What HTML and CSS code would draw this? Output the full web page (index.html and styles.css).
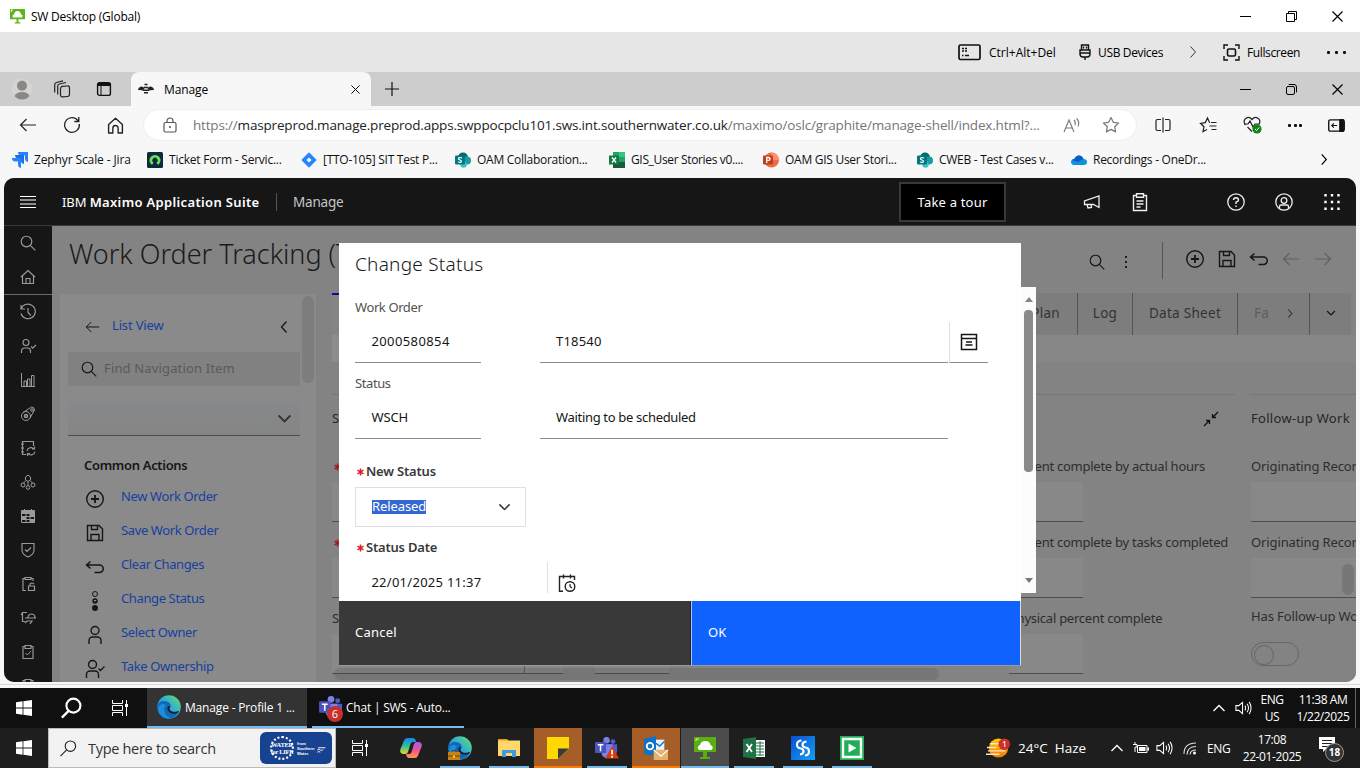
FILE: index.html
```html
<!DOCTYPE html>
<html lang="en">
<head>
<meta charset="utf-8">
<title>SW Desktop (Global)</title>
<link rel="stylesheet" href="styles.css">
</head>
<body>
<svg class="defs" width="0" height="0" aria-hidden="true">
  <defs>
    <linearGradient id="gEdge" x1="0" y1="1" x2="1" y2="0"><stop offset="0" stop-color="#0c59a4"/><stop offset=".5" stop-color="#2aa9e0"/><stop offset="1" stop-color="#6de35a"/></linearGradient>
    <linearGradient id="gCopA" x1="0" y1="0" x2="0" y2="1"><stop offset="0" stop-color="#1681f0"/><stop offset=".5" stop-color="#2cc39b"/><stop offset="1" stop-color="#f5cf2c"/></linearGradient>
    <linearGradient id="gCopB" x1="0" y1="0" x2="0" y2="1"><stop offset="0" stop-color="#9a62f5"/><stop offset=".5" stop-color="#f0528f"/><stop offset="1" stop-color="#ff9a4a"/></linearGradient>
    <linearGradient id="gHaze" x1="0" y1="0" x2="0" y2="1"><stop offset="0" stop-color="#ffc800"/><stop offset="1" stop-color="#f27a0c"/></linearGradient>
    <linearGradient id="gBlue" x1="0" y1="0" x2="1" y2="1"><stop offset="0" stop-color="#0a4ed0"/><stop offset="1" stop-color="#12a0f5"/></linearGradient>
  </defs>
  <symbol id="min" viewBox="0 0 11 11"><path d="M0 5.5h11" stroke="currentColor" fill="none"/></symbol>
  <symbol id="restore" viewBox="0 0 11 11"><path d="M.5 2.5h8v8h-8zM2.5 2.5v-2h8v8h-2" stroke="currentColor" fill="none"/></symbol>
  <symbol id="restoreR" viewBox="0 0 11 11"><rect x=".5" y="2.5" width="8" height="8" rx="1.5" stroke="currentColor" fill="none"/><path d="M2.7.5h5.3a2.5 2.5 0 0 1 2.5 2.5v5.300" stroke="currentColor" fill="none"/></symbol>
  <symbol id="close" viewBox="0 0 11 11"><path d="M.5.500l10 10M10.500.500l-10 10" stroke="currentColor" stroke-width="1.2" fill="none"/></symbol>
  <symbol id="search" viewBox="0 0 16 16"><g fill="none" stroke="currentColor" stroke-width="1.150"><circle cx="6.500" cy="6.500" r="5.300"/><path d="M10.300 10.300l5 5"/></g></symbol>
  <symbol id="chevR" viewBox="0 0 8 14"><path d="M1.500 1.500l5 5.500-5 5.500" fill="none" stroke="currentColor" stroke-width="1.300"/></symbol>
  <symbol id="chevD" viewBox="0 0 14 8"><path d="M1.500 1.200l5.500 5.500 5.500-5.500" fill="none" stroke="currentColor" stroke-width="1.700"/></symbol>
  <symbol id="arrL" viewBox="0 0 18 14"><path d="M17 7H1.500M7.500 1L1.500 7l6 6" fill="none" stroke="currentColor" stroke-width="1.200"/></symbol>
  <symbol id="addc" viewBox="0 0 20 20"><circle cx="10" cy="10" r="8.300" fill="none" stroke="currentColor" stroke-width="1.400"/><path d="M10 6v8M6 10h8" stroke="currentColor" stroke-width="1.800"/></symbol>
  <symbol id="save" viewBox="0 0 20 20"><path d="M2.500 2.500h11.500l3.500 3.500v11.500h-15zM6.500 2.500v4h6v-4M6 17.500v-6h8v6" fill="none" stroke="currentColor" stroke-width="1.400"/></symbol>
  <symbol id="undo" viewBox="0 0 20 20"><path d="M5.500 4.500L1.500 8l4 3.500M1.500 8h13a3.700 3.700 0 0 1 0 7.500H9.500" fill="none" stroke="currentColor" stroke-width="1.500"/></symbol>
  <symbol id="win" viewBox="0 0 16 16"><path d="M0 2.200l6.600-.9v6.200H0zM7.400 1.200L16 0v7.500H7.400zM0 8.400h6.600v6.300L0 13.800zM7.400 8.400H16V16l-8.600-1.200z" fill="#fff"/></symbol>
  <symbol id="taskv" viewBox="0 0 16 16"><path d="M.5 0v3.500h10V0M.5 16v-3.500h10V16M.5 5.500h10v5H.5zM14.500 0v16" fill="none" stroke="#fff"/><path d="M13 4h3v3h-3z" fill="#fff"/></symbol>
  <symbol id="edge" viewBox="0 0 24 24"><circle cx="12" cy="12" r="11.800" fill="url(#gEdge)"/><path d="M.3 12C1 6.500 6 5 10 6.500c4 1.500 4 4 3.500 5-3 3 1 7 8.500 4.500-2 5-7 8-12.500 7.600C4 23 .2 18 .3 12z" fill="#1268b8"/><path d="M9 10c-4 4-1 11 5 13.500-6 1-12-3-13-9.500C1.500 9 6 8 9 10z" fill="#1b8fdc"/><path d="M13.500 11.500c-3 3 1 7.500 8.500 4.500l-.5 1.200c-6 4-12-1-11-4.500.500-2 2-2 3-1.200z" fill="#1e1e1e"/></symbol>
  <symbol id="teams" viewBox="0 0 26 24"><circle cx="19.500" cy="5" r="2.600" fill="#5059c9"/><circle cx="12.500" cy="3.500" r="3.500" fill="#7b83eb"/><path d="M13 8h11v8a4 4 0 0 1-6 3z" fill="#5059c9"/><path d="M6 8h13v9a6 6 0 0 1-12 0z" fill="#7b83eb"/><rect y="5.500" width="12" height="12" rx="1" fill="#4b53bc"/><path d="M3 8.500h6M6 8.500v7" stroke="#fff" stroke-width="1.600"/></symbol>
  <symbol id="vol" viewBox="0 0 18 16"><path d="M1 5.500h3L8 2v12L4 10.500H1zM10.500 5.500q1.500 2.500 0 5M12.800 3.500q3 4.500 0 9M15 1.500q4 6.500 0 13" fill="none" stroke="#fff" stroke-width="1.100"/></symbol>
  <symbol id="sp" viewBox="0 0 16 16"><circle cx="8" cy="5.500" r="5" fill="#036c70"/><circle cx="12" cy="8.500" r="4" fill="#1a9ba1"/><circle cx="8.500" cy="12.500" r="3.200" fill="#37c6d0"/><rect y="3.500" width="10" height="9" rx="1" fill="#03787c"/><path d="M7 6q-3.500-1.200-3.500.700 0 1 1.500 1.300t1.500 1.200q0 1.800-3.500.800" fill="none" stroke="#fff" stroke-width="1.200"/></symbol>
  <symbol id="clip" viewBox="0 0 16 16"><path d="M5 2.500H3v12h10v-12h-2M5 1.500h6v3H5z" fill="none" stroke="currentColor" stroke-width="1.150"/></symbol>
  <symbol id="user" viewBox="0 0 20 20"><circle cx="10" cy="5.500" r="4" fill="none" stroke="currentColor" stroke-width="1.400"/><path d="M4 19v-3.500a3.500 3.500 0 0 1 3.500-3.500h5a3.500 3.500 0 0 1 3.500 3.500V19" fill="none" stroke="currentColor" stroke-width="1.400"/></symbol>
  <symbol id="req" viewBox="0 0 7 8"><path d="M3.500.5v7M.5 2.200l6 3.600M6.500 2.200l-6 3.600" fill="none" stroke="currentColor" stroke-width="1.500"/></symbol>
</svg>

<div class="screen">
  <header class="titlebar">
    <svg class="logo" viewBox="0 0 16 16"><path d="M0 0h16v11H0zM7 11h2v3H7zM5 14h6v1.500H5z" fill="#5bb51b"/><path d="M1 1h2M1.500 1v2" stroke="#fff"/><path d="M3 9q-1-3 1.500-3.500Q5 2 8 2t3.700 3.500Q14 6 13 9z" fill="#fff"/></svg>
    <span class="seg">SW Desktop (Global)</span>
    <div class="winbtns"><svg><use href="#min"/></svg><svg><use href="#restore"/></svg><svg><use href="#close"/></svg></div>
  </header>

  <div class="remote">
    <svg class="kbd" viewBox="0 0 24 17"><rect x="1" y="1" width="21" height="14.500" rx="1.500" fill="none" stroke="#111" stroke-width="1.700"/><path d="M4 4.500h2M7 4.500h2M4 7h2M7 7h2M4 11.500h1.500M7 11.500h4" stroke="#111" stroke-width="1.500"/></svg>
    <span class="seg r1">Ctrl+Alt+Del</span>
    <svg class="usb" viewBox="0 0 12 17"><path d="M2.500 6V1h7v5M1 6h10v4q0 3-3 3H4q-3 0-3-3zM6 13v3M4.500 2.500v2M7.500 2.500v2M1 9h10" fill="none" stroke="#111" stroke-width="1.400"/></svg>
    <span class="seg r2">USB Devices</span>
    <svg class="rchev" viewBox="0 0 8 14"><path d="M1.500 1.500l5 5.500-5 5.500" fill="none" stroke="#333"/></svg>
    <svg class="fs" viewBox="0 0 17 17"><path d="M1 5V1h4M12 1h4v4M16 12v4h-4M5 16H1v-4" fill="none" stroke="#111" stroke-width="1.400"/><rect x="4.500" y="5" width="8" height="7" rx="1.500" fill="none" stroke="#111" stroke-width="1.600"/></svg>
    <span class="seg r3">Fullscreen</span>
    <span class="dots"><i></i><i></i><i></i></span>
  </div>

  <div class="tabstrip">
    <svg class="avatar" viewBox="0 0 22 22"><circle cx="11" cy="11" r="10.500" fill="#d6d3d1"/><circle cx="11" cy="7.800" r="5" fill="#8a8785"/><path d="M3.500 18q2-4 7.500-4t7.500 4q-3 3.500-7.500 3.500T3.500 18z" fill="#8a8785"/></svg>
    <svg class="ws" viewBox="0 0 18 18"><g fill="none" stroke="#222" stroke-width="1.200"><rect x="7.500" y="6" width="9" height="10.500" rx="2" transform="skewY(-4) translate(0 1)"/><path d="M4.700 14.500V6Q4.700 4.500 6.500 4l6.500-1.500M1.700 12.500V5Q1.700 3 3.500 2.500l6.500-1.700"/></g></svg>
    <svg class="va" viewBox="0 0 16 16"><rect x="1.600" y="1.600" width="12.800" height="12.800" rx="2" fill="none" stroke="#111" stroke-width="1.400"/><path d="M1.500 2h13v3h-13z" fill="#111"/><path d="M5 5v9" stroke="#111"/></svg>
    <div class="tab">
      <svg class="bee" viewBox="0 0 16 12"><path d="M0 7Q.5 3.500 4 3.500L6.500 5 5 7.500 1.500 7zM16 7Q15.500 3.500 12 3.500L9.500 5 11 7.500 14.500 7z" fill="#222"/><path d="M6.500 1.500h3M5.700 4.500h4.600M5 7.200h6M6 9.800h4" stroke="#222" stroke-width="1.500"/></svg>
      <span class="seg">Manage</span>
      <svg class="tclose"><use href="#close"/></svg>
    </div>
    <svg class="plus" viewBox="0 0 14 14"><path d="M7 0v14M0 7h14" stroke="#111" stroke-width="1.200"/></svg>
    <div class="winbtns"><svg><use href="#min"/></svg><svg><use href="#restoreR"/></svg><svg><use href="#close"/></svg></div>
  </div>

  <div class="addr">
    <svg class="back"><use href="#arrL"/></svg>
    <svg class="reload" viewBox="0 0 18 18"><path d="M16.300 8A7.400 7.400 0 1 1 13 2.800l2.500 2.200M15.800 1v4.500h-4.500" fill="none" stroke="#222" stroke-width="1.300"/></svg>
    <svg class="home" viewBox="0 0 16 16"><path d="M1.500 7L8 1.200 14.500 7v8h-4v-4.500a2.500 2.500 0 0 0-5 0V15h-4z" fill="none" stroke="#222" stroke-width="1.300" stroke-linejoin="round"/></svg>
    <div class="pill">
      <svg class="lock" viewBox="0 0 14 16"><rect x="1" y="5.500" width="12" height="9.500" rx="1.500" fill="none" stroke="#555" stroke-width="1.200"/><path d="M4 5.500V4a3 3 0 0 1 6 0v1.500" fill="none" stroke="#555" stroke-width="1.200"/><circle cx="7" cy="10" r="1" fill="#555"/></svg>
      <span class="url"><em>https://</em>maspreprod.manage.preprod.apps.swppocpclu101.sws.int.southernwater.co.uk<em>/maximo/oslc/graphite/manage-shell/index.html?...</em></span>
      <svg class="read" viewBox="0 0 17 15"><path d="M1 14L6 2l5 12M2.700 10h6.600M11 2q2 2 1 5M13.500.500q3.500 3 1.500 8" fill="none" stroke="#777" stroke-width="1.100"/></svg>
      <svg class="star" viewBox="0 0 18 18"><path d="M9 1.500l2.300 4.800 5.200.700-3.800 3.700.900 5.200L9 13.400l-4.600 2.500.900-5.200L1.500 7l5.200-.700z" fill="none" stroke="#777" stroke-width="1.200" stroke-linejoin="round"/></svg>
    </div>
    <svg class="split" viewBox="0 0 16 16"><path d="M6 2.500H2.500q-1.500 0-1.500 1.500v8q0 1.500 1.500 1.500H6M10 2.500h3.500q1.500 0 1.500 1.500v8q0 1.500-1.500 1.500H10M8 .500v15" fill="none" stroke="#222" stroke-width="1.200"/></svg>
    <svg class="favs" viewBox="0 0 18 18"><path d="M11 6.500h-.5L8.500 2 6.300 6.600 1.500 7.300 5 10.700 4 15.700 8 13.500M12 6.500h5.500M10.500 10h7M12.500 13.500h5" fill="none" stroke="#222" stroke-width="1.200"/></svg>
    <svg class="heart" viewBox="0 0 20 18"><path d="M2.500 9Q0 6 2 3.200 5.500-.500 9 3.500q3.500-4 7-.300Q18 6 15.500 9M9 15.500L4.500 11M1 8h4l2-3 3 6 2-3h4" fill="none" stroke="#222" stroke-width="1.200"/><circle cx="14" cy="13" r="4.600" fill="#12851b"/><path d="M12 13l1.500 1.500 2.700-3" fill="none" stroke="#fff"/></svg>
    <span class="dots small"><i></i><i></i><i></i></span>
    <svg class="side" viewBox="0 0 16 12"><rect x=".7" y=".7" width="14.600" height="10.600" rx="1.500" fill="none" stroke="#111" stroke-width="1.300"/><path d="M10.500 0H15v12h-4.500z" fill="#111"/><path d="M8.500 6H3.500M5.500 4l-2 2 2 2" fill="none" stroke="#111"/></svg>
  </div>

  <div class="marks">
    <a><svg viewBox="0 0 16 16"><path d="M6 0h10v10q-3-.5-3-3.500V3.500H9.500Q6 3.500 6 0z" fill="#2684ff"/><path d="M3 3h9v9q-3-.5-3-3.500V6.500H7Q3 6.500 3 3z" fill="#1c6fe8"/><path d="M0 6h9v10q-3-.5-3-3.500V9.500H3.500Q0 9.500 0 6z" fill="#2684ff"/></svg><span class="w1">Zephyr Scale - Jira</span></a>
    <a><svg viewBox="0 0 16 16"><rect width="16" height="16" rx="1.500" fill="#0b2b3a"/><path d="M5 13a5.500 5.500 0 1 1 6 0l-1.500-2.500a2.600 2.600 0 1 0-3 0z" fill="#6fdc5b"/></svg><span class="w2">Ticket Form - Servic...</span></a>
    <a><svg viewBox="0 0 16 16"><path d="M8 .300L15.700 8 8 15.700.300 8z" fill="#2684ff"/><path d="M8 5.500L10.500 8 8 10.500 5.500 8z" fill="#f7f7f7"/></svg><span>[TTO-105] SIT Test P...</span></a>
    <a><svg viewBox="0 0 16 16"><use href="#sp"/></svg><span>OAM Collaboration...</span></a>
    <a><svg viewBox="0 0 16 16"><path d="M4 0h12v16H4z" fill="#21a366"/><path d="M10 0h6v5h-6z" fill="#33c481"/><path d="M4 10h12v6H4z" fill="#185c37"/><rect y="3.500" width="10" height="9" fill="#107c41"/><path d="M3 5.500l4 5M7 5.500l-4 5" stroke="#fff" stroke-width="1.400"/></svg><span class="w5">GIS_User Stories v0....</span></a>
    <a><svg viewBox="0 0 16 16"><circle cx="8.500" cy="8" r="7.500" fill="#ed6c47"/><path d="M8.500.500A7.500 7.500 0 0 1 16 8H8.500z" fill="#ff8f6b"/><rect y="3.500" width="10" height="9" rx="1" fill="#c43e1c"/><path d="M3.700 11V5.500h1.800q1.500 0 1.500 1.400T5.500 8.400H3.700" fill="none" stroke="#fff" stroke-width="1.300"/></svg><span>OAM GIS User Stori...</span></a>
    <a><svg viewBox="0 0 16 16"><use href="#sp"/></svg><span>CWEB - Test Cases v...</span></a>
    <a><svg viewBox="0 0 16 16"><path d="M3 13Q0 12.500 0 10t3-3q1.500-3.500 5-3.500 3.500 0 4.500 3.500Q16 7 16 10t-3 3z" fill="#1490df"/><path d="M1 8q1-1.500 3-1Q5 3.500 8 3.500q3 0 4.500 3.500L7 10z" fill="#0a5fc4"/></svg><span>Recordings - OneDr...</span></a>
    <svg class="mchev" viewBox="0 0 8 14"><use href="#chevR"/></svg>
  </div>

  <div class="appwrap">
  <div class="app">
    <div class="apphead">
      <svg class="burger" viewBox="0 0 16 12"><path d="M0 .500h16M0 11.500h16" stroke="#fff"/><path d="M0 4h16M0 8h16" stroke="#b5b5b5" stroke-width="1.500"/></svg>
      <span class="brand">IBM <b>Maximo Application Suite</b></span>
      <span class="bdiv"></span><span class="prod">Manage</span>
      <button class="tour">Take a tour</button>
      <svg class="h1" viewBox="0 0 18 18"><path d="M16 3v11.500L10.500 11.500H1.500V8L16 3zM4 11.500l1 3.500 3.500-.5-.5-3" fill="none" stroke="#eee" stroke-width="1.300"/></svg>
      <svg class="h2" viewBox="0 0 18 18"><path d="M5 2.500H2.500v15h13v-15H13M5.500.800h7v3.500h-7zM5.500 8h7M5.500 11h7M5.500 14h4" fill="none" stroke="#eee" stroke-width="1.400"/></svg>
      <svg class="h3" viewBox="0 0 18 18"><circle cx="9" cy="9" r="8.200" fill="none" stroke="#eee" stroke-width="1.300"/><path d="M6.500 7q0-2.300 2.500-2.300T11.500 7Q11.500 8.500 9 9.200V11M9 12.500V14" fill="none" stroke="#eee" stroke-width="1.400"/></svg>
      <svg class="h4" viewBox="0 0 18 18"><circle cx="9" cy="9" r="8.200" fill="none" stroke="#eee" stroke-width="1.300"/><circle cx="9" cy="7.500" r="2.800" fill="none" stroke="#eee" stroke-width="1.300"/><path d="M4.500 15v-1.500q0-1.500 1.500-1.500h6q1.500 0 1.500 1.500V15" fill="none" stroke="#eee" stroke-width="1.300"/></svg>
      <svg class="h5" viewBox="0 0 16 16"><path d="M1.500 0v16M8 0v16M14.500 0v16" stroke="#fff" stroke-width="2.400" stroke-dasharray="2.400 4.400"/></svg>
    </div>

    <div class="appbody">
      <nav class="rail">
        <span><svg viewBox="0 0 16 16"><use href="#search"/></svg></span>
        <span class="ln"><svg viewBox="0 0 16 16"><path d="M1 8l7-6.500L15 8M2.500 7v7.500h11V7M6 14.500V9.500h4v5" fill="none" stroke="currentColor" stroke-width="1.150"/></svg></span>
        <span><svg viewBox="0 0 16 16"><path d="M1.300 4.500A7.300 7.300 0 1 1 1 9.500M1 1v4h4M8 4v4.500l3 3" fill="none" stroke="currentColor" stroke-width="1.150"/></svg></span>
        <span><svg viewBox="0 0 16 16"><circle cx="6" cy="4.500" r="3" fill="none" stroke="currentColor" stroke-width="1.150"/><path d="M1.500 15v-2q0-3 3-3h3q3 0 3 3v2M11 8.500l1.700 1.700L16 7" fill="none" stroke="currentColor" stroke-width="1.150"/></svg></span>
        <span><svg viewBox="0 0 16 16"><path d="M1.500 1v13.500H15M4 14V9h2.500v5M7.500 14V7H10v7M11.500 14V3.500H14V14" fill="none" stroke="currentColor"/></svg></span>
        <span><svg viewBox="0 0 16 16"><circle cx="6" cy="10" r="4.500" fill="none" stroke="currentColor"/><circle cx="6" cy="10" r="1.500" fill="none" stroke="currentColor" stroke-width="1.500"/><path d="M3 6.500L11.500 1q3 0 3 3L10 12" fill="none" stroke="currentColor"/><circle cx="12" cy="4" r="1.300" fill="none" stroke="currentColor"/></svg></span>
        <span><svg viewBox="0 0 16 16"><path d="M13.500 6V1.500h-11v13H6M1 4h3M1 8h3M1 12h3M7 11a4 4 0 0 1 7-2M14.500 6.500V9H12M15 11.500a4 4 0 0 1-7 2M7.500 16v-2.500H10" fill="none" stroke="currentColor" stroke-width="1.150"/></svg></span>
        <span><svg viewBox="0 0 16 16"><g fill="none" stroke="currentColor"><path d="M8 1l2.500 2v3L8 7.500 5.500 6V3zM8 7.500V12M6 6.500L3.500 9M10 6.500L12.500 9"/><circle cx="3" cy="11" r="2"/><circle cx="13" cy="11" r="2"/><circle cx="8" cy="13.500" r="1.800"/></g></svg></span>
        <span><svg viewBox="0 0 16 16"><path d="M1.500 2.500h13v12h-13zM1.500 5.500h13M4.500 1v3M11.500 1v3M1.500 8.500h13M1.500 11.500h13M6 6v8M10 6v8" fill="none" stroke="currentColor"/><path d="M10 6h4v3h-4zM2 9h4v3H2zM10 12h4v2h-4zM2 3h12v2H2z" fill="currentColor"/></svg></span>
        <span><svg viewBox="0 0 16 16"><path d="M2 1.500h12V8q0 4.500-6 7-6-2.500-6-7zM5 7.500L7 9.500l4-4" fill="none" stroke="currentColor" stroke-width="1.150"/></svg></span>
        <span><svg viewBox="0 0 16 16"><path d="M5 2.500H3v12h3M11 2.500h2V5M5 1.500h6v2H5zM8.500 10h6v4.500h-6zM10 10V8q2-2 4 0" fill="none" stroke="currentColor" stroke-width="1.150"/></svg></span>
        <span><svg viewBox="0 0 16 16"><path d="M7 2.500H2.500v9H5M1 5l1.500-2.500M8 8q0-4 3.500-4T15 8zM5 8h11M7 11h5l-2 3M7 11L5 13" fill="none" stroke="currentColor" stroke-width="1.200"/></svg></span>
        <span><svg viewBox="0 0 16 16"><use href="#clip"/><path d="M5.500 9l2 2L11 7" fill="none" stroke="currentColor"/></svg></span>
        <span><svg viewBox="0 0 16 16"><use href="#clip"/></svg></span>
      </nav>

      <main class="main">
        <div class="pagehead">
          <h1>Work Order Tracking (T</h1>
          <div class="tools">
            <svg class="t-s" viewBox="0 0 16 16"><use href="#search"/></svg>
            <svg class="t-d" viewBox="0 0 4 14"><path d="M2 1v2M2 6v2M2 11v2" stroke="#1c1c1c" stroke-width="2"/></svg>
            <span class="t-v"></span>
            <svg viewBox="0 0 20 20"><use href="#addc"/></svg>
            <svg viewBox="0 0 20 20"><use href="#save"/></svg>
            <svg viewBox="0 0 20 20"><use href="#undo"/></svg>
            <svg class="dim" viewBox="-1 -3 20 20"><use href="#arrL" width="18" height="14"/></svg>
            <svg class="dim flip" viewBox="-1 -3 20 20"><use href="#arrL" width="18" height="14"/></svg>
          </div>
        </div>

        <div class="columns">
          <aside class="side-panel">
            <div class="list-view"><svg class="lv-a" viewBox="0 0 18 14"><use href="#arrL"/></svg><a>List View</a><svg class="lv-c" viewBox="0 0 8 14"><use href="#chevR"/></svg></div>
            <div class="find"><svg viewBox="0 0 16 16"><use href="#search"/></svg><span>Find Navigation Item</span></div>
            <div class="combo"><svg viewBox="0 0 14 8"><use href="#chevD"/></svg></div>
            <h2>Common Actions</h2>
            <ul class="actions">
              <li><svg viewBox="0 0 20 20"><use href="#addc"/></svg><a>New Work Order</a></li>
              <li><svg viewBox="0 0 20 20"><use href="#save"/></svg><a>Save Work Order</a></li>
              <li><svg viewBox="0 0 20 20"><use href="#undo"/></svg><a>Clear Changes</a></li>
              <li><svg viewBox="0 0 20 20"><circle cx="10" cy="3" r="2.500" fill="none" stroke="currentColor"/><circle cx="10" cy="10" r="2.700" fill="currentColor"/><path d="M8.500 9h3L10 10.700z" fill="#999"/><circle cx="10" cy="17" r="3" fill="currentColor"/></svg><a>Change Status</a></li>
              <li><svg viewBox="0 0 20 20"><use href="#user"/></svg><a>Select Owner</a></li>
              <li><svg viewBox="0 0 20 20"><g transform="translate(-2.500 0)"><use href="#user" width="20" height="20"/></g><path d="M13.500 9.500l2 2 4-4" fill="none" stroke="currentColor" stroke-width="1.300"/></svg><a>Take Ownership</a></li>
            </ul>
            <i class="scroll-left"></i>
          </aside>

          <section class="content">
            <div class="tabs"><i class="active"></i><span class="tb plan">Plan</span><span class="tb log">Log</span><span class="tb ds">Data Sheet</span><span class="tb fa"><em>Fa</em><svg viewBox="0 0 8 14"><use href="#chevR"/></svg></span><span class="tb dd"><svg viewBox="0 0 14 8"><use href="#chevD"/></svg></span></div>
            <div class="strip"><i></i></div>
            <div class="cards">
              <div class="card main-card">
                <div class="cardhead"><span>S</span><svg viewBox="0 0 14 14"><path d="M0 14l5.500-5.500M2 8.500h3.500V12M14 0L8.500 5.500M8.500 2v3.500H12" fill="none" stroke="#111" stroke-width="1.300"/></svg></div>
                <div class="frow"><div class="cell c1"><label><svg viewBox="0 0 7 8"><use href="#req"/></svg></label><p></p></div><div class="cell c3"><label>Percent complete by actual hours</label><p></p></div></div>
                <div class="frow"><div class="cell c1"><label><svg viewBox="0 0 7 8"><use href="#req"/></svg></label><p></p></div><div class="cell c3"><label>Percent complete by tasks completed</label><p></p></div></div>
                <div class="frow"><div class="cell c1 wide"><label>S</label><p><i></i></p></div><div class="cell c2"><p></p></div><div class="cell c3"><label>Physical percent complete</label><p></p></div></div>
              </div>
              <div class="card right-card">
                <div class="cardhead"><span>Follow-up Work</span></div>
                <div class="frow"><div class="cell"><label>Originating Record</label><p></p></div></div>
                <div class="frow"><div class="cell"><label>Originating Record</label><p></p></div></div>
                <div class="frow tg"><label>Has Follow-up Wo</label><div class="toggle"></div></div>
              </div>
            </div>
            <i class="scroll-h"></i><i class="scroll-v"></i>
          </section>
        </div>
      </main>
    </div>

    <div class="modal">
      <h3>Change Status</h3>
      <div class="mbody">
        <div class="mrow"><label>Work Order</label><div class="fields"><p class="f1 num">2000580854</p><p class="f2 code">T18540</p><p class="f3"><svg viewBox="0 0 18 18"><path d="M1.500 1.500h15v15h-15zM1.500 5.500h15" fill="none" stroke="#161616" stroke-width="1.500"/><path d="M6 9h6M5.500 12h7" stroke="#161616" stroke-width="1.300"/></svg></p></div></div>
        <div class="mrow"><label>Status</label><div class="fields"><p class="f1">WSCH</p><p class="f2">Waiting to be scheduled</p></div></div>
        <div class="mrow req"><label><svg viewBox="0 0 7 8"><use href="#req"/></svg>New Status</label><div class="select"><mark>Released</mark><svg viewBox="0 0 14 8"><use href="#chevD"/></svg></div></div>
        <div class="mrow date"><label><svg viewBox="0 0 7 8"><use href="#req"/></svg>Status Date</label><div class="fields"><p class="f4">22/01/2025 11:37</p><p class="f5"><svg viewBox="0 0 18 18"><path d="M5 17.200H1.500V2.500h15V6M5.500.500v4M12.500.500v4" fill="none" stroke="#222" stroke-width="1.400"/><circle cx="12" cy="12.500" r="4.800" fill="none" stroke="#222" stroke-width="1.400"/><path d="M12 10v2.500l2 1.500" fill="none" stroke="#222" stroke-width="1.200"/></svg></p></div></div>
      </div>
      <div class="mfoot"><button class="cancel">Cancel</button><button class="ok">OK</button></div>
      <div class="mscroll"><i class="up"></i><i class="thumb"></i><i class="down"></i></div>
    </div>
  </div>
  </div>

  <div class="bar bar1">
    <svg class="bi win"><use href="#win"/></svg>
    <svg class="bsearch" viewBox="0 0 24 22"><circle cx="14" cy="8.500" r="7.300" fill="none" stroke="#fff" stroke-width="2.200"/><path d="M9 14l-7 7" stroke="#fff" stroke-width="2.400"/></svg>
    <svg class="bi"><use href="#taskv"/></svg>
    <div class="task t1"><svg viewBox="0 0 24 24"><use href="#edge"/></svg><span class="seg">Manage - Profile 1 ...</span></div>
    <div class="task t2"><svg viewBox="0 0 26 24"><use href="#teams"/></svg><b class="badge">6</b><span class="seg">Chat | SWS - Auto...</span></div>
    <div class="tray">
      <svg class="up1" viewBox="0 0 14 8"><path d="M1.500 7L7 1.500 12.500 7" fill="none" stroke="#fff" stroke-width="1.300"/></svg>
      <svg class="vol" viewBox="0 0 18 16"><use href="#vol"/></svg>
      <span class="two lang">ENG<br>US</span><span class="two clock">11:38 AM<br>1/22/2025</span><i class="edge-line"></i>
    </div>
  </div>

  <div class="bar bar2">
    <svg class="bi win"><use href="#win"/></svg>
    <div class="wsearch"><svg class="ws-i" viewBox="0 0 18 18"><circle cx="11" cy="6.500" r="5.500" fill="none" stroke="#222" stroke-width="1.200"/><path d="M7 10.500l-6.500 6.500" stroke="#222" stroke-width="1.200"/></svg><span>Type here to search</span>
      <div class="water"><div class="wl"><span>WATER</span><span>for LIFE</span></div><div class="sw"><span>from</span><span>Southern</span><span>Water.</span></div><svg viewBox="0 0 12 8"><path d="M2 1h10M1 4q2-2 4 0t4-1M1 7q2-2 4 0" fill="none" stroke="#fff" stroke-width="1.200"/></svg></div></div>
    <svg class="bi tv2"><use href="#taskv"/></svg>
    <div class="ic cop"><svg viewBox="0 0 24 24"><path d="M8 2h6q2 0 2.500 2l.5 2h-3q-2 0-2.600 2L9 16q-.8 2-2.500 2H4q-4-1-2.500-5L5 4.500Q6 2 8 2z" fill="url(#gCopA)"/><path d="M16 22h-6q-2 0-2.500-2L7 18h3q2 0 2.600-2L15 8q.8-2 2.500-2H20q4 1 2.500 5L19 19.500q-1 2.500-3 2.500z" fill="url(#gCopB)"/></svg></div>
    <div class="ic run"><svg viewBox="0 0 24 24"><use href="#edge"/><path d="M0 16h12v8H0z" fill="#c98312"/><path d="M0 20h12M4 16v-1.500h4V16" stroke="#704300" fill="none"/><path d="M5 19.500h2v2H5z" fill="#ffd35a"/></svg></div>
    <div class="ic run"><svg viewBox="0 0 24 24"><path d="M1 3h9l2 2H1z" fill="#e3a100"/><path d="M1 4.500h22V20H1z" fill="#ffd76a"/><path d="M5 14h14v7h-4v-4H9v4H5z" fill="#3f9ae0"/></svg></div>
    <div class="ic or"><svg viewBox="0 0 24 24"><path d="M1 1h22v22H1z" fill="#ffd800"/><path d="M12 12.500h11L12 23z" fill="#3b3b3b"/><path d="M12 23L23 12.500V23z" fill="#a65e28"/></svg></div>
    <div class="ic run"><svg viewBox="0 0 26 24"><use href="#teams"/><path d="M18.500 10L26 23.500H11z" fill="#dd3a0a"/><path d="M18.500 14v5M18.500 20.500v2" stroke="#fff" stroke-width="1.800"/></svg></div>
    <div class="ic or"><svg viewBox="0 0 26 26"><path d="M0 3l13-3v22L0 19.500z" fill="#0f72c6"/><path d="M13 4h9v13h-9z" fill="#e8f1fa"/><path d="M13 8l4 3 5-5" fill="none" stroke="#0f72c6" stroke-width="1.500"/><circle cx="6.500" cy="11" r="3.500" fill="none" stroke="#fff" stroke-width="2"/><path d="M10.500 15H26v11H10.500z" fill="#e8b06a"/><path d="M10.500 15l7.800 7 7.700-7" fill="none" stroke="#fff" stroke-width="1.300"/></svg></div>
    <div class="ic gr"><svg viewBox="0 0 24 24"><path d="M1 1h22v15H1zM10 16h4v5h-4zM7 21h10v2H7z" fill="#5bae12"/><path d="M3 5V3h3" fill="none" stroke="#d9f2bd"/><path d="M6 14q-3-3 1-5 1-4 5-4 5 0 5.500 4 4 2 1 5z" fill="#fff"/></svg></div>
    <div class="ic run"><svg viewBox="0 0 24 24"><path d="M12 4h11v17H12z" fill="#fff"/><path d="M14 7h8M14 10h8M14 13h8M14 16h8M14 19h8M18 5v15" stroke="#1f7246"/><path d="M1 3l13-2v22L1 21z" fill="#1f7246"/><path d="M4.500 8l5.500 8M10 8l-5.500 8" stroke="#fff" stroke-width="1.800"/></svg></div>
    <div class="ic run"><svg viewBox="0 0 24 24"><path d="M0 0h24v24H0z" fill="url(#gBlue)"/><path d="M10.500 4.500q-4.500.5-4.500 4t4 4q2.500.5 2.500 3t-3.500 3M14 19.500q4-.5 4-4t-3.500-4q-3-.5-3-3T15.500 5.500" fill="none" stroke="#fff" stroke-width="2.100"/></svg></div>
    <div class="ic run"><svg viewBox="0 0 24 24"><path d="M0 0h24v24H0z" fill="#1fb055"/><path d="M3 3h18v18H3z" fill="none" stroke="#fff" stroke-width="2.400"/><path d="M8.500 7.500L16.500 12l-8 4.500z" fill="#fff"/></svg></div>
    <div class="tray">
      <svg class="haze" viewBox="0 0 26 22"><circle cx="13" cy="11" r="10" fill="url(#gHaze)"/><path d="M4 6.500h12M1 10.500h10M2 14h18M0 17.500h14" stroke="#ffe8c0" stroke-width="1.500"/><circle cx="19" cy="7" r="6" fill="#c9302c"/><path d="M17.500 5.500L19.500 4v6" stroke="#fff" fill="none"/></svg>
      <span class="wx">24°C&nbsp; Haze</span>
      <svg class="up1" viewBox="0 0 14 8"><path d="M1.500 7L7 1.500 12.500 7" fill="none" stroke="#fff" stroke-width="1.300"/></svg>
      <svg class="bat" viewBox="0 0 17 12"><path d="M5.500 3.500h9.500v7h-9.500zM3 0v3M1 2.500h4v2.500H3v5" fill="none" stroke="#fff"/><path d="M7 5h6.500v4H7zM15.500 5.500H17v3h-1.500z" fill="#fff"/></svg>
      <svg class="vol" viewBox="0 0 18 16"><use href="#vol"/></svg>
      <svg class="wifi" viewBox="0 0 14 14"><path d="M1 13Q1 2 13 2M4 13.500Q4.500 5.500 13 5.500M7 13.500q.5-4.500 6-4.500" fill="none" stroke="#ddd" stroke-width="1.100"/><circle cx="11.500" cy="12" r="1.500" fill="#fff"/></svg>
      <span class="eng">ENG</span>
      <span class="two clock2">17:08<br>22-01-2025</span>
      <span class="notif"><svg viewBox="0 0 16 16"><path d="M0 0h16v12H7l-3 3v-3H0z" fill="#fff"/><path d="M3 3.500h10M3 6.500h10M3 9.500h6" stroke="#222"/></svg><b>18</b></span>
    </div>
  </div>
</div>
</body>
</html>
```
FILE: styles.css
```css
* { box-sizing: border-box; }
body { margin: 0; font-family: "Open Sans", "Noto Sans", sans-serif; font-size: 12px; color: #000; overflow: hidden; }
svg { display: block; flex: none; overflow: visible; }
button { font: inherit; border: 0; padding: 0; }
p, h1, h2, h3, ul { margin: 0; padding: 0; font-weight: 400; }
.defs { position: absolute; }
.screen { width: 1360px; height: 768px; display: flex; flex-direction: column; background: #f7f7f7; overflow: hidden; }
.screen > * { flex: none; }
.seg { font-size: 12px; letter-spacing: -0.22px; white-space: nowrap; }

.titlebar { height: 32px; background: #fff; display: flex; align-items: center; padding-left: 10px; }
.logo { width: 15px; height: 15px; margin-right: 6px; }
.winbtns { margin-left: auto; display: flex; gap: 35px; padding-right: 17px; }
.winbtns svg { width: 11px; height: 11px; }

.remote { height: 40px; background: #e6e6e6; display: flex; align-items: center; padding-left: 958px; }
.kbd { width: 24px; height: 17px; margin-right: 7px; }
.r1 { width: 90px; letter-spacing: 0; } .r2 { width: 91px; letter-spacing: -.35px; } .r3 { width: 80px; letter-spacing: -.38px; }
.usb { width: 12px; height: 17px; margin-right: 7px; }
.rchev { width: 8px; height: 14px; margin-right: 26px; }
.fs { width: 17px; height: 17px; margin-right: 7px; }
.dots { display: flex; gap: 5px; }
.dots i { width: 3px; height: 3px; background: #111; border-radius: 1px; }

.tabstrip { height: 34px; background: #cdcdcd; display: flex; align-items: center; padding-left: 11px; }
.avatar { width: 22px; height: 22px; margin-right: 20px; }
.ws { width: 18px; height: 18px; margin-right: 25px; }
.va { width: 16px; height: 16px; margin-right: 19px; }
.tab { width: 240px; height: 34px; background: #f7f7f7; border-radius: 8px 8px 0 0; display: flex; align-items: center; padding: 0 11px 0 7px; }
.tab .seg { font-size: 12px; letter-spacing: -.1px; margin-left: 10px; }
.bee { width: 16px; height: 12px; }
.tclose { width: 9px; height: 9px; margin-left: auto; }
.plus { width: 14px; height: 14px; margin-left: 14px; }

.addr { height: 38px; display: flex; align-items: center; padding-left: 19px; color: #222; }
.back { width: 18px; height: 14px; margin-right: 26px; }
.reload { width: 18px; height: 18px; margin-right: 26px; }
.home { width: 17px; height: 17px; margin-right: 20px; }
.pill { width: 992px; height: 30px; background: #fff; border-radius: 15px; display: flex; align-items: center; padding-left: 19px; box-shadow: 0 0 2px #ddd; }
.lock { width: 14px; height: 16px; margin-right: 16px; }
.url { width: 870px; font-size: 13.500px; letter-spacing: -0.18px; white-space: nowrap; }
.url em { font-style: normal; color: #767676; }
.read { width: 17px; height: 15px; margin-right: 22px; }
.star { width: 18px; height: 18px; }
.split { width: 16px; height: 16px; margin-left: 19px; }
.favs { width: 18px; height: 18px; margin-left: 28px; }
.heart { width: 20px; height: 18px; margin-left: 26px; }
.addr .dots { width: 14px; margin-left: 25px; justify-content: space-between; gap: 0; }
.side { width: 17px; height: 13px; margin-left: 26px; }

.marks { height: 34px; display: flex; align-items: center; padding: 0 0 3px 12px; }
.marks a { display: flex; align-items: center; width: 154px; gap: 6px; letter-spacing: -0.27px; white-space: nowrap; color: #111; }
.marks a:first-child { width: 135px; }
.marks a svg { width: 16px; height: 16px; }
.marks .w1 { letter-spacing: -.12px; } .marks .w2 { letter-spacing: -.22px; } .marks .w5 { letter-spacing: -.35px; }
.mchev { width: 8px; height: 13px; margin-left: 95px; }

.appwrap { height: 510px; padding: 0 4px 3px; border-bottom: 3px solid #f7f7f7; box-shadow: inset 0 -1px #d8d8d8; }
.app { position: relative; height: 504px; border-radius: 10px; background: #838383; overflow: hidden; font-family: "Noto Sans", "Open Sans", sans-serif; font-size: 13px; }
.apphead { height: 48px; background: #161616; border-bottom: 1px solid #393939; display: flex; align-items: center; padding-left: 16px; color: #f4f4f4; white-space: nowrap; }
.burger { width: 16px; height: 12px; margin-right: 26px; }
.brand { width: 214px; letter-spacing: -0.1px; color: #fff; }
.brand b { font-weight: 600; letter-spacing: .34px; }
.bdiv { width: 1px; height: 18px; background: #555; }
.prod { margin-left: 16px; width: 606px; color: #c6c6c6; font-size: 13.500px; letter-spacing: -.2px; }
.tour { width: 107px; height: 40px; background: #000; border: 2px solid #393939; color: #fff; letter-spacing: .2px; }
.apphead svg:not(.burger) { width: 18px; height: 18px; }
.apphead .h1 { margin-left: 77px; } .apphead .h2 { margin-left: 30px; } .apphead .h3 { margin-left: 78px; } .apphead .h4 { margin-left: 30px; }
.apphead svg.h5 { width: 16px; height: 16px; margin-left: 31px; }
.appbody { display: flex; height: 456px; }
.rail { width: 48px; background: #161616; color: #9a9a9a; overflow: hidden; }
.rail span { height: 34px; display: flex; align-items: center; justify-content: center; }
.rail .ln { height: 35px; border-bottom: 1px solid #6a6a6a; }
.rail svg { width: 16px; height: 16px; }

.main { flex: 1; min-width: 0; }
.pagehead { height: 67px; display: flex; justify-content: space-between; padding: 8px 23px 0 17px; }
.pagehead h1 { font-size: 27px; font-weight: 300; line-height: 40px; letter-spacing: 0; width: 290px; white-space: nowrap; color: #1a1a1a; }
.tools { display: flex; align-items: center; height: 50px; color: #161616; }
.tools svg { width: 20px; height: 20px; margin-left: 12px; }
.tools svg.t-s { width: 16px; height: 16px; margin: 5px 0 0; }
.tools svg.t-d { width: 4px; height: 14px; margin: 5px 34px 0 19px; }
.t-v { width: 1px; height: 37px; background: #555; margin: 2px 10px 0 0; }
.tools svg.dim { color: #606060; }
.flip { transform: scaleX(-1); }
.columns { display: flex; height: 389px; }

.side-panel { position: relative; width: 256px; margin: 1px 8px 0; padding: 0 16px 0 8px; background: #8a8a8a; overflow: hidden; color: #161616; }
.list-view { display: flex; align-items: center; height: 58px; padding: 7px 12px 0 17px; }
.list-view a { flex: 1; letter-spacing: -.15px; margin: -4px 0 0 12px; color: #1840a0; }
.lv-a { width: 15px; height: 12px; }
.lv-c { width: 8px; height: 14px; transform: scaleX(-1); }
.find { height: 34px; background: #818181; display: flex; align-items: center; padding-left: 13px; gap: 7px; color: #5a5a5a; letter-spacing: .15px; }
.find span { margin-top: -2px; }
.find svg { width: 16px; height: 16px; color: #161616; }
.combo { height: 34px; margin-top: 16px; background: linear-gradient(#86888b, #858585); border-bottom: 1px solid #4c4c4c; display: flex; align-items: center; justify-content: flex-end; padding-right: 8px; }
.combo svg { width: 15px; height: 9px; color: #333; }
.side-panel h2 { font-size: 13px; font-weight: 600; height: 20px; line-height: 20px; margin: 19px 0 4px 16px; letter-spacing: -.32px; }
.actions { list-style: none; padding-left: 17px; }
.actions li { height: 34px; display: flex; align-items: center; gap: 16px; white-space: nowrap; }
.actions svg { width: 20px; height: 20px; margin-top: 5px; }
.actions a { color: #1840a0; letter-spacing: -.38px; }
.scroll-left { position: absolute; left: 242px; top: 2px; width: 12px; height: 87px; background: #7d7d7d; border-radius: 6px; }

.content { position: relative; flex: 1; min-width: 0; padding-left: 8px; }
.tabs { display: flex; height: 42px; color: #393939; font-size: 13.500px; letter-spacing: .3px; width: 1019px; }
.tabs .active { width: 600px; border-top: 2px solid #0b0b9a; background: #858585; }
.tb { border-right: 1px solid #555; background: #7d7d7d; display: flex; align-items: center; justify-content: center; color: #333; white-space: nowrap; padding-bottom: 2px; }
.plan { width: 146px; justify-content: flex-end; padding-right: 17px; } .log { width: 55px; } .ds { width: 105px; } .fa { width: 72px; } .dd { width: 41px; border: 0; }
.fa em { font-style: normal; color: #5e5e5e; margin-right: 18px; } .fa svg { width: 6px; height: 11px; color: #111; } .dd svg { width: 10px; height: 6px; color: #111; }
.strip { height: 27px; background: #878787; }
.strip i { display: block; height: 27px; width: 600px; background: #8d8d8d; }
.cards { display: flex; gap: 15px; padding-top: 32px; background: #838383; }
.card { border-top: 1px solid #777; height: 288px; }
.main-card { width: 903px; }
.right-card { width: 106px; padding-left: 1px; overflow: hidden; white-space: nowrap; }
.cardhead { height: 48px; display: flex; align-items: center; justify-content: space-between; padding-right: 17px; color: #262626; letter-spacing: .3px; }
.cardhead span { margin-top: -2px; }
.cardhead svg { width: 14px; height: 14px; }
.right-card .cardhead { padding-right: 0; }
.frow { height: 76px; display: flex; padding-top: 12px; position: relative; color: #2d2d2d; }
.frow label { display: block; height: 20px; line-height: 22px; letter-spacing: -.25px; white-space: nowrap; }
.frow label svg { width: 7px; height: 8px; color: #a2191f; transform: translate(2px, 8px); }
.frow p { height: 40px; margin-top: 7px; background: #888; border-bottom: 1px solid #4d4d4d; width: 74px; }
.c1 { width: 263px; } .c1 p { width: 231px; }
.wide p i { display: block; width: 1px; height: 39px; margin-left: 192px; background: #5a5a5a; }
.c2 { width: 414px; padding-top: 20px; }
.c3 { margin-left: auto; width: 226px; }
.right-card .frow p { width: 110px; }
.right-card .cell { width: 106px; }
.right-card .frow label { letter-spacing: -.12px; }
.tg { flex-direction: column; padding-top: 10px; }
.toggle { width: 48px; height: 24px; border: 1px solid #666; border-radius: 12px; margin-top: 17px; padding: 2px; }
.toggle::before { content: ""; display: block; width: 18px; height: 18px; border: 1px solid #666; border-radius: 50%; }
.scroll-h { position: absolute; left: 10px; top: 375px; width: 605px; height: 12px; border-radius: 6px; background: rgba(60, 60, 60, .17); }
.scroll-v { position: absolute; right: 2px; top: 271px; width: 12px; height: 31px; border-radius: 6px; background: #777; }

.modal { position: absolute; left: 335px; top: 65px; width: 682px; height: 422px; background: #fff; color: #161616; display: flex; flex-direction: column; box-shadow: 0 1px #999; }
.modal h3 { height: 44px; line-height: 42px; padding-left: 16px; font-size: 19px; font-weight: 300; letter-spacing: .25px; }
.mbody { height: 306px; padding: 11px 0 0 16px; overflow: hidden; }
.mrow { height: 76px; }
.mrow label { display: flex; height: 24px; line-height: 19px; letter-spacing: -.4px; color: #525252; }
.mrow label svg { width: 7px; height: 8px; margin: 6px 2px 0; color: #da1e28; }
.mrow.req { margin-top: 12px; }
.req label, .date label { font-weight: 600; color: #393939; line-height: 18px; letter-spacing: -.2px; }
.fields { display: flex; }
.fields p { height: 41px; line-height: 39px; border-bottom: 1px solid #8d8d8d; padding-left: 16px; }
.fields .f1 { width: 126px; margin-right: 59px; letter-spacing: -.1px; }
.fields .f2 { width: 408px; letter-spacing: -.32px; }
.fields .num { letter-spacing: .4px; }
.fields .code { letter-spacing: .2px; }
.fields .f3, .fields .f5 { width: 39px; padding: 11px 0 0 10px; margin-left: 1px; border-left: 1px solid #e0e0e0; }
.f3 svg, .f5 svg { width: 18px; height: 18px; }
.fields .f4 { width: 191px; letter-spacing: .27px; }
.fields .f1, .fields .f4 { text-indent: .4px; }
.date .f4 { line-height: 40px; }
.date .fields .f5 { padding-top: 12px; }
.select { width: 171px; height: 40px; border: 1px solid #e0e0e0; margin-top: 1px; display: flex; align-items: center; justify-content: space-between; padding: 0 14px 0 16px; }
.select mark { background: #3367d1; color: #fff; height: 14px; line-height: 13px; letter-spacing: -.1px; }
.select svg { width: 13px; height: 8px; color: #393939; }
.mfoot { display: flex; height: 64px; margin-top: 8px; background: #dcdcdc; }
.mfoot button { text-align: left; color: #fff; padding: 0 0 2px 16px; }
.cancel { width: 352px; background: #393939; border-right: 1px solid #222; letter-spacing: .25px; }
.mfoot .ok { width: 329px; background: #0f62fe; border-left: 1px solid #a6c8ff; }
.mscroll { position: absolute; left: 682px; top: 44px; width: 15px; height: 306px; background: #fcfcfc; display: flex; flex-direction: column; align-items: center; }
.up { margin-top: 10px; border: 4px solid transparent; border-top: 0; border-bottom: 5px solid #858585; }
.thumb { margin-top: 8px; width: 9px; height: 162px; border-radius: 4px; background: #8a8a8a; }
.down { margin-top: 106px; border: 4px solid transparent; border-bottom: 0; border-top: 5px solid #777; }

.bar { height: 40px; display: flex; align-items: center; color: #fff; padding-left: 16px; }
.bar1 { background: #101010; }
.bar2 { background: #1e1e1e; }
.bi { width: 16px; height: 16px; }
.bsearch { width: 23px; height: 22px; margin: 0 29px 0 28px; }
.task { position: relative; height: 40px; display: flex; align-items: center; border-bottom: 2px solid #76b9ed; }
.t1 { margin-left: 19px; width: 160px; background: #333; padding-left: 10px; gap: 4px; }
.t1 .seg { letter-spacing: -.17px; }
.t1 svg { width: 24px; height: 24px; }
.t2 { margin-left: 5px; width: 152px; padding-left: 7px; gap: 2px; }
.t2 svg { width: 25px; height: 23px; }
.badge { position: absolute; left: 15px; top: 18px; width: 16px; height: 16px; border-radius: 8px; background: #c9302c; font-weight: 400; font-size: 11px; line-height: 16px; text-align: center; }
.tray { margin-left: auto; display: flex; align-items: center; height: 40px; white-space: nowrap; }
.up1 { width: 14px; height: 8px; }
.vol { width: 17px; height: 16px; margin-left: 9px; }
.two { line-height: 17px; text-align: center; letter-spacing: -.4px; }
.lang { width: 40px; } .clock { width: 62px; margin-right: 1px; letter-spacing: -.45px; }
.edge-line { width: 1px; height: 40px; background: #666; margin-right: 4px; }
.wsearch { width: 288px; height: 40px; margin-left: 16px; border: 1px solid #bbb; background: #f2f2f2; display: flex; align-items: center; padding: 0 3px 0 11px; color: #333; font-size: 14.500px; letter-spacing: -.3px; white-space: nowrap; }
.ws-i { width: 17px; height: 17px; margin-right: 11px; }
.water { margin-left: auto; width: 72px; height: 32px; border-radius: 6px; background: #17428f; display: flex; align-items: center; padding-left: 10px; color: #fff; }
.wl { width: 24px; height: 24px; border-radius: 50%; border: 2px dotted #fff; display: flex; flex-direction: column; justify-content: center; align-items: center; font: 700 6.500px/7px "Liberation Serif", serif; }
.sw { font: 700 4px/5px "Liberation Sans", sans-serif; display: flex; flex-direction: column; margin: 0 1px 0 3px; letter-spacing: 0; }
.water svg { width: 10px; height: 6px; margin-top: 4px; }
.tv2 { margin: 0 23px 0 16px; }
.ic { width: 40px; height: 40px; margin-right: 9px; display: flex; justify-content: center; align-items: center; }
.ic svg { width: 24px; height: 24px; }
.run { border-bottom: 2px solid #76b9ed; padding-top: 2px; }
.or { width: 48px; margin: 0 5px 0 -4px; background: #a65e28; border-bottom: 2px solid #ff7a00; padding-top: 2px; }
.gr { width: 48px; margin: 0 5px 0 -4px; background: #4c4c4c; border-bottom: 2px solid #76b9ed; padding-top: 2px; }
.bar2 .tray { padding-right: 15px; }
.haze { width: 25px; height: 22px; margin-right: 7px; }
.wx { width: 92px; font-size: 13.500px; letter-spacing: 0; }
.bat { width: 17px; height: 12px; margin-left: 8px; }
.bar2 .vol { margin-left: 7px; }
.wifi { width: 14px; height: 14px; margin-left: 10px; }
.eng { margin-left: 10px; width: 35px; letter-spacing: -.4px; }
.clock2 { width: 60px; margin-right: 17px; }
.notif { position: relative; width: 26px; height: 24px; }
.notif svg { width: 16px; height: 16px; margin-top: 1px; }
.notif b { position: absolute; left: 6px; top: 7px; width: 19px; height: 19px; border-radius: 50%; border: 1px solid #999; background: #333; font-size: 10px; line-height: 17px; text-align: center; }
```
